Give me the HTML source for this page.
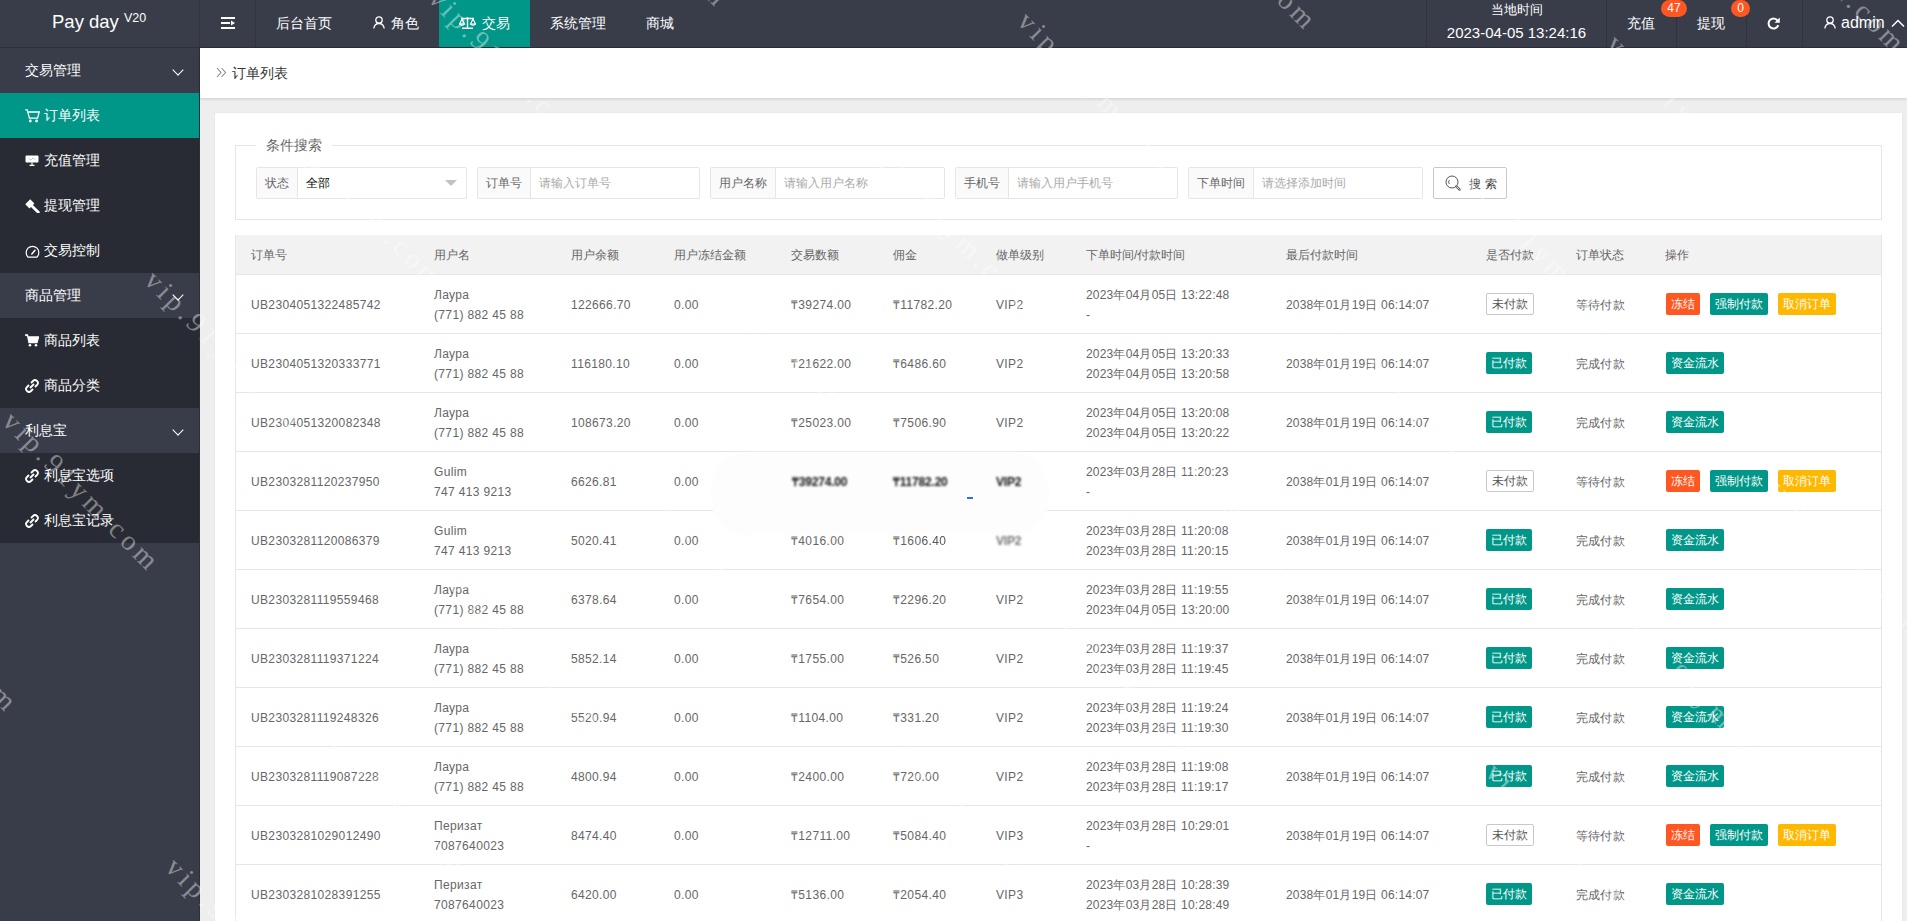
<!DOCTYPE html>
<html><head><meta charset="utf-8">
<style>
*{margin:0;padding:0;box-sizing:border-box}
html,body{width:1907px;height:921px;overflow:hidden;background:#eeeeee;font-family:"Liberation Sans",sans-serif;font-size:12px;color:#666;position:relative}
#hdr{position:absolute;left:0;top:0;width:1907px;height:48px;background:#393d4a;border-bottom:1px solid #2d3039}
#logo{position:absolute;left:0;top:0;width:200px;height:47px;color:#fff;font-size:19px;text-align:center;line-height:44px}
#logo sup{font-size:12px;position:relative;top:-2px}
.vsep{position:absolute;top:0;width:1px;height:47px;background:#30333d}
.nav{position:absolute;top:0;height:47px;line-height:46px;color:#fff;font-size:14px;white-space:nowrap}
#side{position:absolute;left:0;top:48px;width:200px;height:873px;background:#393d4a;border-right:1px solid #2d3039}
.grp{position:absolute;left:0;width:199px;height:45px;background:#393d4a;color:#fff;font-size:14px;line-height:45px;padding-left:25px}
.itm{position:absolute;left:0;width:199px;height:45px;background:#282b33;color:#fff;font-size:14px;line-height:45px;padding-left:44px}
.itm.on{background:#009688}
.chev{position:absolute;left:174px;top:18px;width:8px;height:8px;border-right:1.5px solid #fff;border-bottom:1.5px solid #fff;transform:rotate(45deg)}
.ico{position:absolute;left:25px;top:16px}
#crumb{position:absolute;left:200px;top:48px;width:1707px;height:50px;background:#fff;box-shadow:0 1px 3px rgba(0,0,0,.14)}
#card{position:absolute;left:215px;top:113px;width:1687px;height:808px;background:#fff;box-shadow:0 0 1.5px rgba(0,0,0,.07)}
.fs{position:absolute;left:235px;top:145px;width:1647px;height:75px;border:1px solid #e6e6e6}
.legend{position:absolute;left:256px;top:136px;padding:0 10px;background:#fff;font-size:14px;color:#666;line-height:18px}
.grpi{position:absolute;top:167px;height:32px;border:1px solid #e6e6e6;border-radius:2px;background:#fff}
.lab{position:absolute;left:0;top:0;height:30px;line-height:30px;padding:0 8px;background:#fafafa;border-right:1px solid #e6e6e6;color:#666;font-size:12px;white-space:nowrap}
.ph{position:absolute;top:0;height:30px;line-height:30px;color:#aaa;font-size:12px;white-space:nowrap}
.sbtn{position:absolute;left:1433px;top:167px;width:74px;height:32px;border:1px solid #c9c9c9;border-radius:2px;background:#fff;color:#555;font-size:13px;line-height:30px}
.tbl{position:absolute;left:235px;top:235px;width:1647px;height:700px;border:1px solid #e6e6e6;border-bottom:0}
.th{position:absolute;left:236px;width:1645px;height:40px;background:#f2f2f2;border-bottom:1px solid #e6e6e6}
.hl{position:absolute;left:236px;width:1645px;height:1px;background:#e6e6e6}
.t1{position:absolute;white-space:nowrap;line-height:20px;font-size:12px;color:#666;letter-spacing:.35px}
.t2{position:absolute;white-space:nowrap;line-height:20px;font-size:12px;color:#666;letter-spacing:.35px}
.hd{color:#666;letter-spacing:0}
.cj{letter-spacing:.2px}
.btn{position:absolute;height:22px;line-height:22px;font-size:12px;color:#fff;text-align:center;border-radius:2px;white-space:nowrap}
.btn.g{background:#009688}
.btn.o{background:#ff5722}
.btn.y{background:#ffb800}
.btn.w{background:#fff;border:1px solid #c9c9c9;color:#555;line-height:20px}
.blur{filter:blur(1px);color:#111;font-weight:bold;letter-spacing:-.2px}
.badge{position:absolute;z-index:3;top:0;height:17px;line-height:17px;border-radius:9px;background:#ff5722;color:#fff;font-size:12px;text-align:center;font-weight:500}
#wm{position:absolute;left:0;top:0;width:1907px;height:921px;overflow:hidden;z-index:50;pointer-events:none}
.wm{position:absolute;font-family:"Liberation Serif",serif;font-size:28px;line-height:30px;letter-spacing:4.2px;color:rgba(255,255,255,.42);white-space:nowrap;transform-origin:0 0;transform:rotate(45.5deg)}
</style></head><body>
<div id="hdr">
  <div style="position:absolute;left:52px;top:11px;font-size:18.5px;line-height:21px;color:#fff;white-space:nowrap">Pay day</div><div style="position:absolute;left:124px;top:11px;font-size:12.5px;line-height:14px;color:#fff">V20</div>
  <div class="vsep" style="left:199px"></div>
  <div class="vsep" style="left:255px"></div>
  <!-- menu toggle -->
  <svg style="position:absolute;left:221px;top:17px" width="14" height="12" viewBox="0 0 14 12"><rect x="0" y="0" width="14" height="2" fill="#fff"/><rect x="0" y="5" width="9" height="2" fill="#fff"/><path d="M10 3.5 L14 6 L10 8.5Z" fill="#fff"/><rect x="0" y="10" width="14" height="2" fill="#fff"/></svg>
  <div class="nav" style="left:276px">后台首页</div>
  <svg style="position:absolute;left:373px;top:16px" width="12" height="13" viewBox="0 0 12 13"><circle cx="6" cy="4" r="3.2" fill="none" stroke="#fff" stroke-width="1.3"/><path d="M0.8 12.5 Q1.5 7.5 6 7.5 Q10.5 7.5 11.2 12.5" fill="none" stroke="#fff" stroke-width="1.3"/></svg>
  <div class="nav" style="left:391px">角色</div>
  <div class="nav" style="left:439px;width:91px;background:#009688"></div>
  <svg style="position:absolute;left:459px;top:16px" width="17" height="13" viewBox="0 0 17 13"><path d="M8.5 1 V12 M3 12.2 H14 M2 2.5 H15" stroke="#fff" stroke-width="1.4" fill="none"/><path d="M3 3 L0.5 8 H5.5 Z M14 3 L11.5 8 H16.5Z" stroke="#fff" stroke-width="1.1" fill="none"/><path d="M0.5 8 Q3 10.5 5.5 8 M11.5 8 Q14 10.5 16.5 8" stroke="#fff" stroke-width="1.1" fill="none"/></svg>
  <div class="nav" style="left:482px">交易</div>
  <div class="nav" style="left:550px">系统管理</div>
  <div class="nav" style="left:646px">商城</div>

  <div class="vsep" style="left:1426px"></div>
  <div class="nav" style="left:1427px;width:179px;text-align:center;font-size:13px;line-height:18px;top:1px">当地时间</div>
  <div class="nav" style="left:1427px;width:179px;text-align:center;font-size:15px;line-height:18px;top:24px;font-weight:400">2023-04-05 13:24:16</div>
  <div class="vsep" style="left:1606px"></div>
  <div class="nav" style="left:1627px">充值</div>
  <div class="badge" style="left:1661px;width:26px">47</div>
  <div class="vsep" style="left:1676px"></div>
  <div class="nav" style="left:1697px">提现</div>
  <div class="badge" style="left:1731px;width:19px">0</div>
  <div class="vsep" style="left:1746px"></div>
  <svg style="position:absolute;left:1767px;top:17px" width="13" height="13" viewBox="0 0 13 13"><path d="M11 4.2 A5 5 0 1 0 11.3 8.2" fill="none" stroke="#fff" stroke-width="2"/><path d="M12.8 0.5 V5.8 H7.5 Z" fill="#fff"/></svg>
  <div class="vsep" style="left:1802px"></div>
  <svg style="position:absolute;left:1824px;top:16px" width="12" height="13" viewBox="0 0 12 13"><circle cx="6" cy="4" r="3.2" fill="none" stroke="#fff" stroke-width="1.3"/><path d="M0.8 12.5 Q1.5 7.5 6 7.5 Q10.5 7.5 11.2 12.5" fill="none" stroke="#fff" stroke-width="1.3"/></svg>
  <div class="nav" style="left:1841px;font-size:16px;font-weight:400">admin</div>
  <svg style="position:absolute;left:1891px;top:19px" width="14" height="8" viewBox="0 0 14 8"><path d="M1 7.5 L7 1.5 L13 7.5" fill="none" stroke="#fff" stroke-width="1.5"/></svg>
</div>

<div id="side">
  <div class="grp" style="top:0">交易管理<div class="chev"></div></div>
  <div class="itm on" style="top:45px"><svg class="ico" width="15" height="14" viewBox="0 0 15 14"><path d="M0.3 0.8 H2.2 L4.4 9.2 H12.6 L14.2 3 H3.2" fill="none" stroke="#fff" stroke-width="1.3"/><circle cx="5.3" cy="12" r="1.4" fill="#fff"/><circle cx="11.6" cy="12" r="1.4" fill="#fff"/></svg>订单列表</div>
  <div class="itm" style="top:90px"><svg class="ico" style="top:17px" width="14" height="11" viewBox="0 0 14 11"><rect x="0.5" y="0.5" width="13" height="7" rx="1" fill="#fff"/><path d="M3.5 3.5 L6 5 L8 3 L10.5 4.5" stroke="#9aa" stroke-width=".6" fill="none"/><path d="M7 7.5 V10 M4.5 10.3 H9.5" stroke="#fff" stroke-width="1.2"/></svg>充值管理</div>
  <div class="itm" style="top:135px"><svg class="ico" style="top:16px" width="15" height="14" viewBox="0 0 15 14"><path d="M0.3 5.2 L5.2 0.3 L9.4 4.5 L4.5 9.4 Z" fill="#fff"/><path d="M7.2 7.2 L13.3 13.3" stroke="#fff" stroke-width="2.8" stroke-linecap="round"/></svg>提现管理</div>
  <div class="itm" style="top:180px"><svg class="ico" style="top:17px" width="15" height="13" viewBox="0 0 15 13"><path d="M3.2 12.2 A6.3 6.3 0 1 1 11.8 12.2 Z" fill="none" stroke="#fff" stroke-width="1.2"/><path d="M6.8 9 L10 5.2" stroke="#fff" stroke-width="1.5" stroke-linecap="round"/></svg>交易控制</div>
  <div class="grp" style="top:225px">商品管理<div class="chev"></div></div>
  <div class="itm" style="top:270px"><svg class="ico" width="14" height="13" viewBox="0 0 14 13"><path d="M0 1 H2.5 L4 8.5 H12 L13.5 3 H3" fill="#fff" stroke="#fff" stroke-width="1.3"/><circle cx="5" cy="11.3" r="1.3" fill="#fff"/><circle cx="11" cy="11.3" r="1.3" fill="#fff"/></svg>商品列表</div>
  <div class="itm" style="top:315px"><svg class="ico" width="14" height="14" viewBox="0 0 14 14"><path d="M6 4 L8 2 A2.8 2.8 0 0 1 12 6 L10 8 M8 10 L6 12 A2.8 2.8 0 0 1 2 8 L4 6 M5 9 L9 5" fill="none" stroke="#fff" stroke-width="1.8"/></svg>商品分类</div>
  <div class="grp" style="top:360px">利息宝<div class="chev"></div></div>
  <div class="itm" style="top:405px"><svg class="ico" width="14" height="14" viewBox="0 0 14 14"><path d="M6 4 L8 2 A2.8 2.8 0 0 1 12 6 L10 8 M8 10 L6 12 A2.8 2.8 0 0 1 2 8 L4 6 M5 9 L9 5" fill="none" stroke="#fff" stroke-width="1.8"/></svg>利息宝选项</div>
  <div class="itm" style="top:450px"><svg class="ico" width="14" height="14" viewBox="0 0 14 14"><path d="M6 4 L8 2 A2.8 2.8 0 0 1 12 6 L10 8 M8 10 L6 12 A2.8 2.8 0 0 1 2 8 L4 6 M5 9 L9 5" fill="none" stroke="#fff" stroke-width="1.8"/></svg>利息宝记录</div>
</div>

<div id="crumb">
  <svg style="position:absolute;left:16px;top:19px" width="11" height="11" viewBox="0 0 11 11"><path d="M1 1 L5 5.5 L1 10 M5.5 1 L9.5 5.5 L5.5 10" fill="none" stroke="#888" stroke-width="1.1"/></svg>
  <div style="position:absolute;left:32px;top:15px;font-size:14px;color:#333;line-height:20px">订单列表</div>
</div>
<div id="card"></div>
<div class="fs"></div>
<div class="legend">条件搜索</div>

<div class="grpi" style="left:256px;width:211px"><div class="lab">状态</div><div class="ph" style="left:49px;color:#000">全部</div>
  <svg style="position:absolute;left:188px;top:12px" width="12" height="7" viewBox="0 0 12 7"><path d="M0 0 H12 L6 6Z" fill="#c2c2c2"/></svg></div>
<div class="grpi" style="left:477px;width:223px"><div class="lab">订单号</div><div class="ph" style="left:61px">请输入订单号</div></div>
<div class="grpi" style="left:710px;width:235px"><div class="lab">用户名称</div><div class="ph" style="left:73px">请输入用户名称</div></div>
<div class="grpi" style="left:955px;width:223px"><div class="lab">手机号</div><div class="ph" style="left:61px">请输入用户手机号</div></div>
<div class="grpi" style="left:1188px;width:235px"><div class="lab">下单时间</div><div class="ph" style="left:73px">请选择添加时间</div></div>
<div class="sbtn"><svg style="position:absolute;left:11px;top:7px" width="17" height="17" viewBox="0 0 17 17"><circle cx="7" cy="7" r="6" fill="none" stroke="#555" stroke-width="1"/><path d="M4.3 5 A3.5 3.5 0 0 0 4.3 9" fill="none" stroke="#555" stroke-width="0.9"/><path d="M11.3 11.3 L14.6 14.6" stroke="#555" stroke-width="2.2" stroke-linecap="round"/><path d="M11.3 11.3 L14.6 14.6" stroke="#fff" stroke-width="0.8"/></svg><span style="position:absolute;left:35px;top:1px;letter-spacing:4px;font-size:12px;color:#444">搜索</span></div>

<div class="tbl"></div>
<div class="th" style="top:235px"></div>
<div class="t1 hd" style="left:251px;top:245px">订单号</div>
<div class="t1 hd" style="left:434px;top:245px">用户名</div>
<div class="t1 hd" style="left:571px;top:245px">用户余额</div>
<div class="t1 hd" style="left:674px;top:245px">用户冻结金额</div>
<div class="t1 hd" style="left:791px;top:245px">交易数额</div>
<div class="t1 hd" style="left:893px;top:245px">佣金</div>
<div class="t1 hd" style="left:996px;top:245px">做单级别</div>
<div class="t1 hd" style="left:1086px;top:245px">下单时间/付款时间</div>
<div class="t1 hd" style="left:1286px;top:245px">最后付款时间</div>
<div class="t1 hd" style="left:1486px;top:245px">是否付款</div>
<div class="t1 hd" style="left:1576px;top:245px">订单状态</div>
<div class="t1 hd" style="left:1665px;top:245px">操作</div>
<div class="hl" style="top:333px"></div>
<div class="t1 " style="left:251px;top:295px">UB2304051322485742</div>
<div class="t2" style="left:434px;top:285px">Лаура<br>(771) 882 45 88</div>
<div class="t1 " style="left:571px;top:295px">122666.70</div>
<div class="t1 " style="left:674px;top:295px">0.00</div>
<div class="t1 " style="left:791px;top:295px">₸39274.00</div>
<div class="t1 " style="left:893px;top:295px">₸11782.20</div>
<div class="t1 " style="left:996px;top:295px">VIP2</div>
<div class="t2 cj" style="left:1086px;top:285px">2023年04月05日 13:22:48<br>-</div>
<div class="t1 cj" style="left:1286px;top:295px">2038年01月19日 06:14:07</div>
<div class="btn w" style="left:1486px;top:293px;width:48px">未付款</div>
<div class="t1 cj" style="left:1576px;top:295px">等待付款</div>
<div class="btn o" style="left:1666px;top:293px;width:34px">冻结</div>
<div class="btn g" style="left:1710px;top:293px;width:58px">强制付款</div>
<div class="btn y" style="left:1778px;top:293px;width:58px">取消订单</div>
<div class="hl" style="top:392px"></div>
<div class="t1 " style="left:251px;top:354px">UB2304051320333771</div>
<div class="t2" style="left:434px;top:344px">Лаура<br>(771) 882 45 88</div>
<div class="t1 " style="left:571px;top:354px">116180.10</div>
<div class="t1 " style="left:674px;top:354px">0.00</div>
<div class="t1 " style="left:791px;top:354px">₸21622.00</div>
<div class="t1 " style="left:893px;top:354px">₸6486.60</div>
<div class="t1 " style="left:996px;top:354px">VIP2</div>
<div class="t2 cj" style="left:1086px;top:344px">2023年04月05日 13:20:33<br>2023年04月05日 13:20:58</div>
<div class="t1 cj" style="left:1286px;top:354px">2038年01月19日 06:14:07</div>
<div class="btn g" style="left:1486px;top:352px;width:46px">已付款</div>
<div class="t1 cj" style="left:1576px;top:354px">完成付款</div>
<div class="btn g" style="left:1666px;top:352px;width:58px">资金流水</div>
<div class="hl" style="top:451px"></div>
<div class="t1 " style="left:251px;top:413px">UB2304051320082348</div>
<div class="t2" style="left:434px;top:403px">Лаура<br>(771) 882 45 88</div>
<div class="t1 " style="left:571px;top:413px">108673.20</div>
<div class="t1 " style="left:674px;top:413px">0.00</div>
<div class="t1 " style="left:791px;top:413px">₸25023.00</div>
<div class="t1 " style="left:893px;top:413px">₸7506.90</div>
<div class="t1 " style="left:996px;top:413px">VIP2</div>
<div class="t2 cj" style="left:1086px;top:403px">2023年04月05日 13:20:08<br>2023年04月05日 13:20:22</div>
<div class="t1 cj" style="left:1286px;top:413px">2038年01月19日 06:14:07</div>
<div class="btn g" style="left:1486px;top:411px;width:46px">已付款</div>
<div class="t1 cj" style="left:1576px;top:413px">完成付款</div>
<div class="btn g" style="left:1666px;top:411px;width:58px">资金流水</div>
<div class="hl" style="top:510px"></div>
<div class="t1 " style="left:251px;top:472px">UB2303281120237950</div>
<div class="t2" style="left:434px;top:462px">Gulim<br>747 413 9213</div>
<div class="t1 " style="left:571px;top:472px">6626.81</div>
<div class="t1 " style="left:674px;top:472px">0.00</div>
<div class="t2 cj" style="left:1086px;top:462px">2023年03月28日 11:20:23<br>-</div>
<div class="t1 cj" style="left:1286px;top:472px">2038年01月19日 06:14:07</div>
<div class="btn w" style="left:1486px;top:470px;width:48px">未付款</div>
<div class="t1 cj" style="left:1576px;top:472px">等待付款</div>
<div class="btn o" style="left:1666px;top:470px;width:34px">冻结</div>
<div class="btn g" style="left:1710px;top:470px;width:58px">强制付款</div>
<div class="btn y" style="left:1778px;top:470px;width:58px">取消订单</div>
<div class="hl" style="top:569px"></div>
<div class="t1 " style="left:251px;top:531px">UB2303281120086379</div>
<div class="t2" style="left:434px;top:521px">Gulim<br>747 413 9213</div>
<div class="t1 " style="left:571px;top:531px">5020.41</div>
<div class="t1 " style="left:674px;top:531px">0.00</div>
<div class="t1 " style="left:791px;top:531px">₸4016.00</div>
<div class="t2 cj" style="left:1086px;top:521px">2023年03月28日 11:20:08<br>2023年03月28日 11:20:15</div>
<div class="t1 cj" style="left:1286px;top:531px">2038年01月19日 06:14:07</div>
<div class="btn g" style="left:1486px;top:529px;width:46px">已付款</div>
<div class="t1 cj" style="left:1576px;top:531px">完成付款</div>
<div class="btn g" style="left:1666px;top:529px;width:58px">资金流水</div>
<div class="hl" style="top:628px"></div>
<div class="t1 " style="left:251px;top:590px">UB2303281119559468</div>
<div class="t2" style="left:434px;top:580px">Лаура<br>(771) 882 45 88</div>
<div class="t1 " style="left:571px;top:590px">6378.64</div>
<div class="t1 " style="left:674px;top:590px">0.00</div>
<div class="t1 " style="left:791px;top:590px">₸7654.00</div>
<div class="t1 " style="left:893px;top:590px">₸2296.20</div>
<div class="t1 " style="left:996px;top:590px">VIP2</div>
<div class="t2 cj" style="left:1086px;top:580px">2023年03月28日 11:19:55<br>2023年04月05日 13:20:00</div>
<div class="t1 cj" style="left:1286px;top:590px">2038年01月19日 06:14:07</div>
<div class="btn g" style="left:1486px;top:588px;width:46px">已付款</div>
<div class="t1 cj" style="left:1576px;top:590px">完成付款</div>
<div class="btn g" style="left:1666px;top:588px;width:58px">资金流水</div>
<div class="hl" style="top:687px"></div>
<div class="t1 " style="left:251px;top:649px">UB2303281119371224</div>
<div class="t2" style="left:434px;top:639px">Лаура<br>(771) 882 45 88</div>
<div class="t1 " style="left:571px;top:649px">5852.14</div>
<div class="t1 " style="left:674px;top:649px">0.00</div>
<div class="t1 " style="left:791px;top:649px">₸1755.00</div>
<div class="t1 " style="left:893px;top:649px">₸526.50</div>
<div class="t1 " style="left:996px;top:649px">VIP2</div>
<div class="t2 cj" style="left:1086px;top:639px">2023年03月28日 11:19:37<br>2023年03月28日 11:19:45</div>
<div class="t1 cj" style="left:1286px;top:649px">2038年01月19日 06:14:07</div>
<div class="btn g" style="left:1486px;top:647px;width:46px">已付款</div>
<div class="t1 cj" style="left:1576px;top:649px">完成付款</div>
<div class="btn g" style="left:1666px;top:647px;width:58px">资金流水</div>
<div class="hl" style="top:746px"></div>
<div class="t1 " style="left:251px;top:708px">UB2303281119248326</div>
<div class="t2" style="left:434px;top:698px">Лаура<br>(771) 882 45 88</div>
<div class="t1 " style="left:571px;top:708px">5520.94</div>
<div class="t1 " style="left:674px;top:708px">0.00</div>
<div class="t1 " style="left:791px;top:708px">₸1104.00</div>
<div class="t1 " style="left:893px;top:708px">₸331.20</div>
<div class="t1 " style="left:996px;top:708px">VIP2</div>
<div class="t2 cj" style="left:1086px;top:698px">2023年03月28日 11:19:24<br>2023年03月28日 11:19:30</div>
<div class="t1 cj" style="left:1286px;top:708px">2038年01月19日 06:14:07</div>
<div class="btn g" style="left:1486px;top:706px;width:46px">已付款</div>
<div class="t1 cj" style="left:1576px;top:708px">完成付款</div>
<div class="btn g" style="left:1666px;top:706px;width:58px">资金流水</div>
<div class="hl" style="top:805px"></div>
<div class="t1 " style="left:251px;top:767px">UB2303281119087228</div>
<div class="t2" style="left:434px;top:757px">Лаура<br>(771) 882 45 88</div>
<div class="t1 " style="left:571px;top:767px">4800.94</div>
<div class="t1 " style="left:674px;top:767px">0.00</div>
<div class="t1 " style="left:791px;top:767px">₸2400.00</div>
<div class="t1 " style="left:893px;top:767px">₸720.00</div>
<div class="t1 " style="left:996px;top:767px">VIP2</div>
<div class="t2 cj" style="left:1086px;top:757px">2023年03月28日 11:19:08<br>2023年03月28日 11:19:17</div>
<div class="t1 cj" style="left:1286px;top:767px">2038年01月19日 06:14:07</div>
<div class="btn g" style="left:1486px;top:765px;width:46px">已付款</div>
<div class="t1 cj" style="left:1576px;top:767px">完成付款</div>
<div class="btn g" style="left:1666px;top:765px;width:58px">资金流水</div>
<div class="hl" style="top:864px"></div>
<div class="t1 " style="left:251px;top:826px">UB2303281029012490</div>
<div class="t2" style="left:434px;top:816px">Перизат<br>7087640023</div>
<div class="t1 " style="left:571px;top:826px">8474.40</div>
<div class="t1 " style="left:674px;top:826px">0.00</div>
<div class="t1 " style="left:791px;top:826px">₸12711.00</div>
<div class="t1 " style="left:893px;top:826px">₸5084.40</div>
<div class="t1 " style="left:996px;top:826px">VIP3</div>
<div class="t2 cj" style="left:1086px;top:816px">2023年03月28日 10:29:01<br>-</div>
<div class="t1 cj" style="left:1286px;top:826px">2038年01月19日 06:14:07</div>
<div class="btn w" style="left:1486px;top:824px;width:48px">未付款</div>
<div class="t1 cj" style="left:1576px;top:826px">等待付款</div>
<div class="btn o" style="left:1666px;top:824px;width:34px">冻结</div>
<div class="btn g" style="left:1710px;top:824px;width:58px">强制付款</div>
<div class="btn y" style="left:1778px;top:824px;width:58px">取消订单</div>
<div class="hl" style="top:923px"></div>
<div class="t1 " style="left:251px;top:885px">UB2303281028391255</div>
<div class="t2" style="left:434px;top:875px">Перизат<br>7087640023</div>
<div class="t1 " style="left:571px;top:885px">6420.00</div>
<div class="t1 " style="left:674px;top:885px">0.00</div>
<div class="t1 " style="left:791px;top:885px">₸5136.00</div>
<div class="t1 " style="left:893px;top:885px">₸2054.40</div>
<div class="t1 " style="left:996px;top:885px">VIP3</div>
<div class="t2 cj" style="left:1086px;top:875px">2023年03月28日 10:28:39<br>2023年03月28日 10:28:49</div>
<div class="t1 cj" style="left:1286px;top:885px">2038年01月19日 06:14:07</div>
<div class="btn g" style="left:1486px;top:883px;width:46px">已付款</div>
<div class="t1 cj" style="left:1576px;top:885px">完成付款</div>
<div class="btn g" style="left:1666px;top:883px;width:58px">资金流水</div>
<div style="position:absolute;left:711px;top:453px;width:338px;height:82px;background:#fdfdfd;border-radius:36px;filter:blur(1.5px)"></div>
<div class="t1 blur" style="left:792px;top:472px">₸39274.00</div>
<div class="t1 blur" style="left:893px;top:472px">₸11782.20</div>
<div class="t1 blur" style="left:996px;top:472px">VIP2</div>
<div class="t1" style="left:893px;top:531px">₸160<span style="filter:blur(.6px);display:inline-block;color:#555">6.40</span></div>
<div class="t1 blur" style="left:996px;top:531px;color:#777">VIP2</div>
<div style="position:absolute;left:967px;top:497px;width:6px;height:1.5px;background:#2a6ff0"></div>
<div id="wm"><div class="wm" style="left:1906px;top:-253px">vip.91ym.com</div><div class="wm" style="left:-3px;top:-181px">vip.91ym.com</div><div class="wm" style="left:586px;top:-158px">vip.91ym.com</div><div class="wm" style="left:1175px;top:-135px">vip.91ym.com</div><div class="wm" style="left:1764px;top:-112px">vip.91ym.com</div><div class="wm" style="left:-145px;top:-40px">vip.91ym.com</div><div class="wm" style="left:444px;top:-17px">vip.91ym.com</div><div class="wm" style="left:1033px;top:6px">vip.91ym.com</div><div class="wm" style="left:1622px;top:29px">vip.91ym.com</div><div class="wm" style="left:302px;top:124px">vip.91ym.com</div><div class="wm" style="left:891px;top:147px">vip.91ym.com</div><div class="wm" style="left:1480px;top:170px">vip.91ym.com</div><div class="wm" style="left:160px;top:265px">vip.91ym.com</div><div class="wm" style="left:749px;top:288px">vip.91ym.com</div><div class="wm" style="left:1338px;top:311px">vip.91ym.com</div><div class="wm" style="left:1927px;top:334px">vip.91ym.com</div><div class="wm" style="left:18px;top:406px">vip.91ym.com</div><div class="wm" style="left:607px;top:429px">vip.91ym.com</div><div class="wm" style="left:1196px;top:452px">vip.91ym.com</div><div class="wm" style="left:1785px;top:475px">vip.91ym.com</div><div class="wm" style="left:-124px;top:547px">vip.91ym.com</div><div class="wm" style="left:465px;top:570px">vip.91ym.com</div><div class="wm" style="left:1054px;top:593px">vip.91ym.com</div><div class="wm" style="left:1643px;top:616px">vip.91ym.com</div><div class="wm" style="left:323px;top:711px">vip.91ym.com</div><div class="wm" style="left:912px;top:734px">vip.91ym.com</div><div class="wm" style="left:1501px;top:757px">vip.91ym.com</div><div class="wm" style="left:181px;top:852px">vip.91ym.com</div><div class="wm" style="left:770px;top:875px">vip.91ym.com</div><div class="wm" style="left:1359px;top:898px">vip.91ym.com</div><div class="wm" style="left:1948px;top:921px">vip.91ym.com</div></div>
</body></html>
